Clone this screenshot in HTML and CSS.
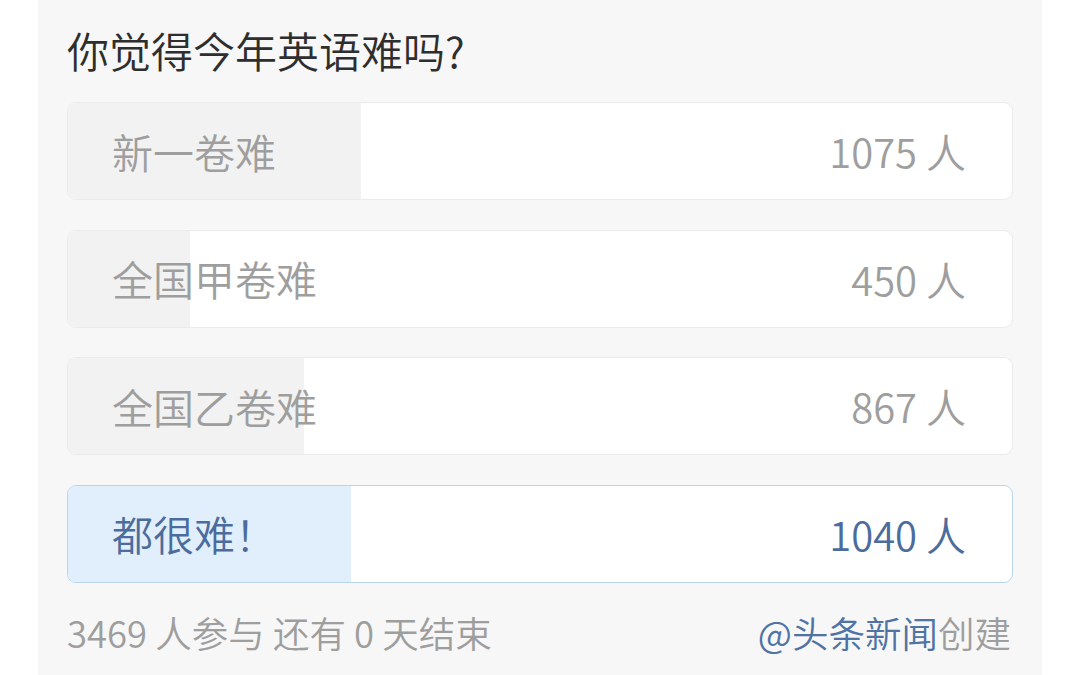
FILE: index.html
```html
<!DOCTYPE html>
<html lang="zh-CN">
<head>
<meta charset="utf-8">
<title>投票</title>
<link rel="stylesheet" href="styles.css">
</head>
<body>
<div class="panel">
  <h1 class="title">你觉得今年英语难吗?</h1>
  <ul class="options">
    <li class="option">
      <div class="fill" style="width:31%"></div>
      <span class="label">新一卷难</span>
      <span class="count">1075 人</span>
    </li>
    <li class="option">
      <div class="fill" style="width:12.97%"></div>
      <span class="label">全国甲卷难</span>
      <span class="count">450 人</span>
    </li>
    <li class="option">
      <div class="fill" style="width:25%"></div>
      <span class="label">全国乙卷难</span>
      <span class="count">867 人</span>
    </li>
    <li class="option selected">
      <div class="fill" style="width:30%"></div>
      <span class="label">都很难！</span>
      <span class="count">1040 人</span>
    </li>
  </ul>
  <div class="footer">
    <span class="stats">3469 人参与 还有 0 天结束</span>
    <span class="creator"><span class="author">@头条新闻</span>创建</span>
  </div>
</div>
</body>
</html>
```

FILE: styles.css
```css
html, body {
  margin: 0;
  padding: 0;
  background: #ffffff;
}

body {
  font-family: "Noto Sans CJK SC", "Noto Sans", sans-serif;
  font-weight: 350;
  width: 1080px;
  height: 675px;
  overflow: hidden;
}

.panel {
  margin-left: 38px;
  width: 1004px;
  height: 675px;
  box-sizing: border-box;
  background: #f7f7f7;
  padding: 22px 29px 0 29px;
  display: flex;
  flex-direction: column;
}

.title {
  margin: 0 0 24px 0;
  font-size: 42px;
  line-height: 56px;
  font-weight: 350;
  color: #2e2e2e;
}

.options {
  list-style: none;
  margin: 0;
  padding: 0;
  display: flex;
  flex-direction: column;
  gap: 29.6px;
}

.option {
  position: relative;
  height: 98px;
  box-sizing: border-box;
  border: 1px solid #ebebeb;
  border-radius: 9px;
  background: #ffffff;
  overflow: hidden;
  display: flex;
  align-items: center;
  justify-content: space-between;
  padding: 0 46px 0 44px;
}

.fill {
  position: absolute;
  left: 0;
  top: 0;
  bottom: 0;
  background: #f2f2f2;
}

.label,
.count {
  position: relative;
  font-size: 41px;
  line-height: 1;
  color: #9e9e9e;
}

.count {
  font-size: 40px;
}

.option.selected {
  border-color: #b7d6ee;
}

.option.selected .fill {
  background: #e1effd;
}

.option.selected .label,
.option.selected .count {
  color: #4b6c9c;
}

.footer {
  margin-top: 25px;
  display: flex;
  justify-content: space-between;
  align-items: center;
  line-height: 50px;
  font-size: 36.5px;
  color: #9e9e9e;
}

.creator {
  margin-right: 2px;
}

.author {
  color: #4f73a4;
}
```
